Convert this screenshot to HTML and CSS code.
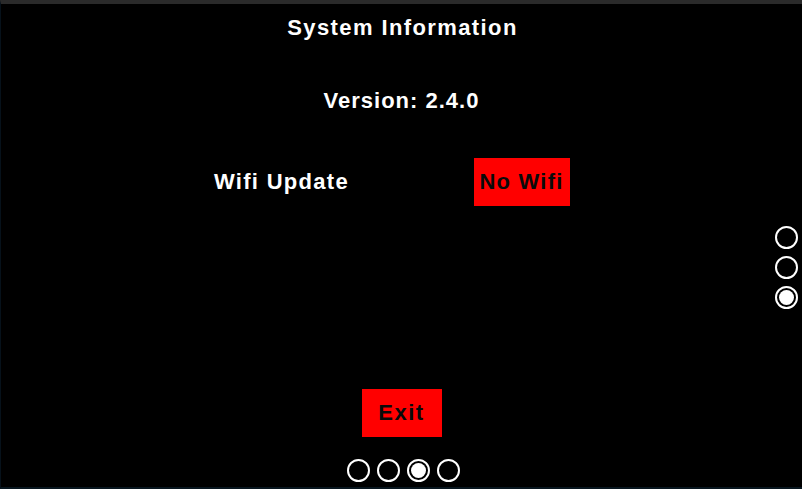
FILE: index.html
```html
<!DOCTYPE html>
<html lang="en">
<head>
<meta charset="utf-8">
<title>System Information</title>
<link rel="stylesheet" href="styles.css">
</head>
<body>
<div class="screen">
  <h1 class="title">System Information</h1>
  <p class="version">Version: 2.4.0</p>
  <div class="row">
    <span class="label">Wifi Update</span>
    <button class="btn btn-wifi">No Wifi</button>
  </div>
  <div class="spacer"></div>
  <button class="btn btn-exit">Exit</button>
  <div class="pager pager-h">
    <span class="dot"></span>
    <span class="dot"></span>
    <span class="dot active"></span>
    <span class="dot"></span>
  </div>
  <div class="pager pager-v">
    <span class="dot"></span>
    <span class="dot"></span>
    <span class="dot active"></span>
  </div>
</div>
</body>
</html>
```
FILE: styles.css
```css
html, body {
  margin: 0;
  padding: 0;
  background: #000;
}
.screen {
  position: relative;
  box-sizing: border-box;
  width: 802px;
  height: 489px;
  background: #000;
  border-top: 4px solid #2a2a2a;
  border-bottom: 2px solid #08161f;
  border-left: 1px solid #06111a;
  display: flex;
  flex-direction: column;
  align-items: center;
  padding-top: 11px;
  padding-bottom: 5px;
  font-family: "Liberation Sans", Arial, sans-serif;
  font-weight: bold;
  color: #fff;
}
.title, .version {
  margin: 0;
  font-size: 22px;
  line-height: 26px;
  font-weight: bold;
  letter-spacing: 1.4px;
}
.title {
  margin-left: 2px;
}
.version {
  margin-top: 47px;
  letter-spacing: 1px;
}
.row {
  margin-top: 44px;
  display: grid;
  grid-template-columns: 240px 240px;
  align-items: center;
  justify-items: center;
}
.label {
  font-size: 22px;
  line-height: 26px;
  letter-spacing: 1.3px;
}
.btn {
  border: none;
  background: #ff0000;
  color: #0a0a0a;
  font-family: "Liberation Sans", Arial, sans-serif;
  font-weight: bold;
  font-size: 22px;
  letter-spacing: 1.2px;
  padding: 0;
  height: 48px;
  display: flex;
  align-items: center;
  justify-content: center;
}
.btn-wifi {
  width: 96px;
}
.spacer {
  flex: 1;
}
.btn-exit {
  width: 80px;
  letter-spacing: 1.5px;
}
.pager {
  display: flex;
  gap: 7px;
}
.pager-h {
  margin-top: 22px;
  margin-left: 4px;
}
.pager-v {
  position: absolute;
  right: 4px;
  top: 222px;
  flex-direction: column;
}
.dot {
  position: relative;
  box-sizing: border-box;
  width: 23px;
  height: 23px;
  border: 2px solid #fff;
  border-radius: 50%;
}
.dot.active::after {
  content: "";
  position: absolute;
  inset: 2px;
  border-radius: 50%;
  background: #fff;
}
```
